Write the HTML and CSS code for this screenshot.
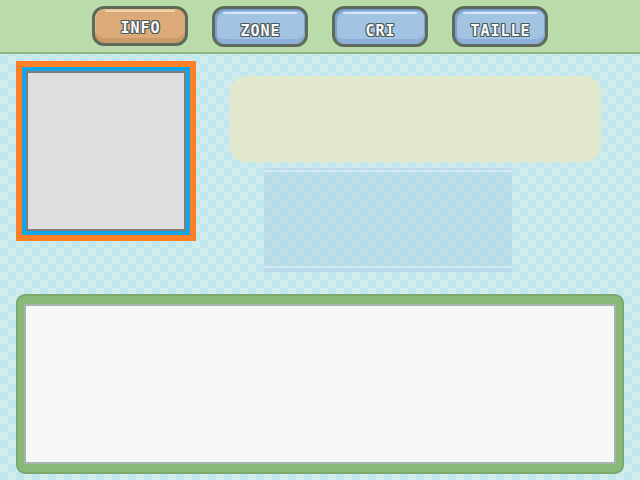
FILE: index.html
```html
<!DOCTYPE html>
<html>
<head>
<meta charset="utf-8">
<link rel="stylesheet" href="styles.css">
</head>
<body>
<header class="topbar">
  <div class="tab tab-active"><span class="tab-label">INFO</span></div>
  <div class="tab"><span class="tab-label">ZONE</span></div>
  <div class="tab"><span class="tab-label">CRI</span></div>
  <div class="tab"><span class="tab-label">TAILLE</span></div>
</header>
<main class="content">
  <section class="upper">
    <div class="portrait"></div>
    <div class="side">
      <div class="name-box"></div>
      <div class="type-box"></div>
    </div>
  </section>
  <section class="dex-panel">
    <div class="dex-text"></div>
  </section>
</main>
</body>
</html>
```
FILE: styles.css
```css
* { box-sizing: border-box; }
html, body { margin: 0; padding: 0; }
body {
  width: 640px;
  height: 480px;
  overflow: hidden;
  background-color: #d0ecee;
  background-image: conic-gradient(#c0e7ed 0 25%, #d0ecee 0 50%, #c0e7ed 0 75%, #d0ecee 0);
  background-size: 16px 16px;
  font-family: "DejaVu Sans Mono", "Liberation Mono", monospace;
}
.topbar {
  height: 54px;
  background: #b9dcaa;
  border-bottom: 2px solid #8fb682;
  display: flex;
  gap: 24px;
  padding: 6px 0 0 92px;
}
.tab {
  width: 96px;
  height: 41px;
  border: 3px solid #5e6a5a;
  border-radius: 12px;
  background: #a3c3e3;
  box-shadow: inset 2px 2px 0 #7a9fd3, inset 0 -5px 0 #8eb0d8, inset -1px 0 0 #7a9fd3;
  display: flex;
  justify-content: center;
  padding-top: 9px;
  align-items: center;
  position: relative;
}
.tab::before {
  content: "";
  position: absolute;
  left: 8px;
  right: 8px;
  top: 3px;
  height: 2px;
  background: #d6e6f6;
  border-radius: 1px;
}
.tab-active {
  height: 40px;
  background: #dbaa78;
  box-shadow: inset 0 -5px 0 #c99a6a, inset 1px 1px 0 #e8bc8c;
  padding-top: 4px;
}
.tab-active::before {
  top: 1px;
  left: 10px;
  right: 10px;
  background: #f2d3ae;
}
.tab-label {
  color: #f8f8f8;
  font-size: 15px;
  font-weight: bold;
  letter-spacing: 1px;
  margin-right: -1px;
  line-height: 12px;
  text-shadow:
    1px 0 0 #4c5a5c, -1px 0 0 #4c5a5c, 0 1px 0 #4c5a5c, 0 -1px 0 #4c5a5c,
    1px 1px 0 #4c5a5c, -1px -1px 0 #4c5a5c, 1px -1px 0 #4c5a5c, -1px 1px 0 #4c5a5c;
}
.content {
  padding: 7px 16px 0 16px;
}
.upper {
  display: flex;
  align-items: flex-start;
  height: 180px;
}
.portrait {
  width: 180px;
  height: 180px;
  flex: none;
  border: 6px solid #fd8026;
  background: #dedede;
  box-shadow: inset 0 0 0 4px #12a6e6, inset 0 0 0 6px #7d7d7d;
}
.side {
  margin-left: 34px;
  padding-top: 15px;
  display: flex;
  flex-direction: column;
  flex: none;
}
.name-box {
  flex: none;
  width: 371px;
  height: 86px;
  background: #e2e8cc;
  border-radius: 16px;
}
.type-box {
  flex: none;
  margin-top: 6px;
  margin-left: 34px;
  width: 248px;
  height: 104px;
  background: rgba(150, 190, 226, 0.3);
  box-shadow: inset 0 2px 0 rgba(150, 190, 226, 0.35), inset 0 4px 0 rgba(255, 255, 255, 0.35),
              inset 0 -4px 0 rgba(150, 190, 226, 0.35), inset 0 -6px 0 rgba(255, 255, 255, 0.35);
}
.dex-panel {
  margin-top: 53px;
  width: 608px;
  height: 180px;
  background: #86b97a;
  border: 2px solid #79a86d;
  border-radius: 9px;
  padding: 8px 6px;
}
.dex-text {
  width: 100%;
  height: 100%;
  background: #f8f8f8;
  border: 2px solid #a7b2b5;
  border-radius: 3px;
}
```
